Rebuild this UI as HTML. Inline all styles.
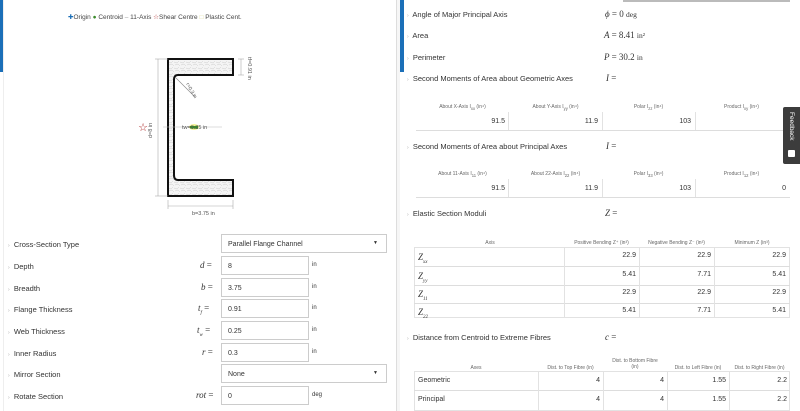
<!DOCTYPE html><html><head><style>
*{margin:0;padding:0;box-sizing:border-box}
body{width:800px;height:411px;overflow:hidden;background:#fff;font-family:"Liberation Sans",sans-serif;font-size:7px;color:#333;position:relative}
.a{position:absolute;white-space:nowrap}
.lbl{font-size:7.5px;color:#333}
.m{font-family:"Liberation Serif",serif;font-style:italic;font-size:9px}
.inp{position:absolute;border:1px solid #ccc;height:19px;font-size:7px;padding:6px 0 0 6px;background:#fff}
.th{font-size:5px;color:#666;text-align:center;line-height:6px}
.v{font-size:7px;text-align:right}
.hl{position:absolute;height:1px;background:#ddd}
.vl{position:absolute;width:1px;background:#e2e2e2}
.ar{color:#aaa;font-size:5px}
</style></head><body>
<div class="a" style="left:0;top:0;width:3px;height:72px;background:#1b6fb8"></div>
<div class="a" style="left:3px;top:0;width:394px;height:411px;border-left:1px solid #eee;border-right:1px solid #ddd"></div>
<div class="a" style="left:400px;top:0;width:4px;height:72px;background:#1b6fb8"></div>
<div class="a" style="left:397px;top:0;width:3px;height:411px;background:#f6f6f6"></div>
<div class="a" style="left:623px;top:0;width:167px;height:2px;background:#bbb"></div>
<div class="a" style="left:68px;top:13px;font-size:6.5px;color:#444"><span style="color:#1b6fb8">✚</span>Origin <span style="color:#3a8a2a">●</span> Centroid <span style="color:#999">–</span> 11-Axis <span style="color:#a22">☆</span>Shear Centre <span style="color:#dd9">□</span> Plastic Cent.</div>
<svg class="a" style="left:0;top:0" width="400" height="230">
<defs><pattern id="p" width="6" height="6" patternUnits="userSpaceOnUse"><rect width="6" height="6" fill="#f4f4f4"/><path d="M0 2l3 1 2-2M1 5l3-1 2 2" stroke="#ccc" stroke-width=".5" fill="none"/></pattern></defs>
<path d="M168 59H233V75H178Q174 75 174 80V175Q174 180 178 180H233V196H168Z" fill="url(#p)" stroke="#111" stroke-width="2"/>
<line x1="158" y1="59" x2="158" y2="196" stroke="#aaa" stroke-width=".6"/>
<line x1="155" y1="59" x2="168" y2="59" stroke="#aaa" stroke-width=".6"/>
<line x1="155" y1="196" x2="168" y2="196" stroke="#aaa" stroke-width=".6"/>
<line x1="168" y1="206" x2="233" y2="206" stroke="#aaa" stroke-width=".6"/>
<line x1="168" y1="200" x2="168" y2="209" stroke="#aaa" stroke-width=".6"/>
<line x1="233" y1="200" x2="233" y2="209" stroke="#aaa" stroke-width=".6"/>
<line x1="241" y1="59" x2="241" y2="75" stroke="#aaa" stroke-width=".6"/>
<line x1="238" y1="59" x2="244" y2="59" stroke="#aaa" stroke-width=".6"/>
<line x1="238" y1="75" x2="244" y2="75" stroke="#aaa" stroke-width=".6"/>
<line x1="176" y1="78" x2="195" y2="97" stroke="#888" stroke-width=".6"/>
<line x1="163" y1="127" x2="222" y2="127" stroke="#bbb" stroke-width=".6"/>
<ellipse cx="194" cy="127" rx="5" ry="3" fill="#ee6" opacity=".7"/>
<rect x="190" y="126" width="8" height="2.5" fill="#3a8a2a"/>
<text x="143" y="131" font-size="11" fill="#a22" text-anchor="middle">☆</text>
<text x="182" y="129" font-size="5.5" fill="#555">tw=0.25 in</text>
<text x="192" y="215" font-size="5.5" fill="#555">b=3.75 in</text>
<text transform="translate(152,138) rotate(-90)" font-size="5.5" fill="#555">d=8 in</text>
<text transform="translate(248,57) rotate(90)" font-size="5.5" fill="#555">tf=0.91 in</text>
<text transform="translate(186,84) rotate(60)" font-size="5" fill="#555">r=0.3 in</text>
</svg>
<div class="a lbl" style="left:8px;top:240px"><span class="ar">›</span>&nbsp; Cross-Section Type</div>
<div class="inp" style="left:221px;top:234px;width:166px">Parallel Flange Channel<span style="position:absolute;right:8px;top:5px;font-size:5px">▼</span></div>
<div class="a lbl" style="left:8px;top:262px"><span class="ar">›</span>&nbsp; Depth</div><div class="a m" style="left:200px;top:260px">d <span style="font-style:normal">=</span></div><div class="inp" style="left:221px;top:256px;width:88px">8</div><div class="a" style="left:312px;top:262px;font-size:6px">in</div>
<div class="a lbl" style="left:8px;top:284px"><span class="ar">›</span>&nbsp; Breadth</div><div class="a m" style="left:201px;top:282px">b <span style="font-style:normal">=</span></div><div class="inp" style="left:221px;top:278px;width:88px">3.75</div><div class="a" style="left:312px;top:284px;font-size:6px">in</div>
<div class="a lbl" style="left:8px;top:305px"><span class="ar">›</span>&nbsp; Flange Thickness</div><div class="a m" style="left:198px;top:303px">t<sub style="font-size:5px">f</sub> <span style="font-style:normal">=</span></div><div class="inp" style="left:221px;top:299px;width:88px">0.91</div><div class="a" style="left:312px;top:305px;font-size:6px">in</div>
<div class="a lbl" style="left:8px;top:327px"><span class="ar">›</span>&nbsp; Web Thickness</div><div class="a m" style="left:197px;top:325px">t<sub style="font-size:5px">w</sub> <span style="font-style:normal">=</span></div><div class="inp" style="left:221px;top:321px;width:88px">0.25</div><div class="a" style="left:312px;top:327px;font-size:6px">in</div>
<div class="a lbl" style="left:8px;top:349px"><span class="ar">›</span>&nbsp; Inner Radius</div><div class="a m" style="left:202px;top:347px">r <span style="font-style:normal">=</span></div><div class="inp" style="left:221px;top:343px;width:88px">0.3</div><div class="a" style="left:312px;top:349px;font-size:6px">in</div>
<div class="a lbl" style="left:8px;top:370px"><span class="ar">›</span>&nbsp; Mirror Section</div>
<div class="inp" style="left:221px;top:364px;width:166px">None<span style="position:absolute;right:8px;top:5px;font-size:5px">▼</span></div>
<div class="a lbl" style="left:8px;top:392px"><span class="ar">›</span>&nbsp; Rotate Section</div><div class="a m" style="left:196px;top:390px">rot <span style="font-style:normal">=</span></div><div class="inp" style="left:221px;top:386px;width:88px">0</div><div class="a" style="left:312px;top:392px;font-size:6px">deg</div>
<div class="a lbl" style="left:407px;top:10px"><span class="ar">›</span>&nbsp; Angle of Major Principal Axis</div><div class="a m" style="left:605px;top:9px">ϕ <span style="font-style:normal">= 0 <small>deg</small></span></div>
<div class="a lbl" style="left:407px;top:31px"><span class="ar">›</span>&nbsp; Area</div><div class="a m" style="left:604px;top:30px">A <span style="font-style:normal">= 8.41 <small>in²</small></span></div>
<div class="a lbl" style="left:407px;top:53px"><span class="ar">›</span>&nbsp; Perimeter</div><div class="a m" style="left:604px;top:52px">P <span style="font-style:normal">= 30.2 <small>in</small></span></div>
<div class="a lbl" style="left:407px;top:74px"><span class="ar">›</span>&nbsp; Second Moments of Area about Geometric Axes</div><div class="a m" style="left:606px;top:73px">I <span style="font-style:normal">=</span></div>
<div class="a th" style="left:416px;top:104px;width:93px">About X-Axis I<sub>xx</sub> (in⁴)</div>
<div class="a th" style="left:509px;top:104px;width:93px">About Y-Axis I<sub>yy</sub> (in⁴)</div>
<div class="a th" style="left:602px;top:104px;width:93px">Polar I<sub>zz</sub> (in⁴)</div>
<div class="a th" style="left:695px;top:104px;width:93px">Product I<sub>xy</sub> (in⁴)</div>
<div class="a v" style="left:416px;top:118px;width:89px">91.5</div><div class="a v" style="left:509px;top:118px;width:89px">11.9</div><div class="a v" style="left:602px;top:118px;width:89px">103</div>
<div class="vl" style="left:508px;top:112px;height:18px"></div><div class="vl" style="left:602px;top:112px;height:18px"></div><div class="vl" style="left:695px;top:112px;height:18px"></div>
<div class="hl" style="left:416px;top:130px;width:374px"></div>
<div class="a lbl" style="left:407px;top:142px"><span class="ar">›</span>&nbsp; Second Moments of Area about Principal Axes</div><div class="a m" style="left:606px;top:141px">I <span style="font-style:normal">=</span></div>
<div class="a th" style="left:416px;top:171px;width:93px">About 11-Axis I<sub>11</sub> (in⁴)</div>
<div class="a th" style="left:509px;top:171px;width:93px">About 22-Axis I<sub>22</sub> (in⁴)</div>
<div class="a th" style="left:602px;top:171px;width:93px">Polar I<sub>33</sub> (in⁴)</div>
<div class="a th" style="left:695px;top:171px;width:93px">Product I<sub>12</sub> (in⁴)</div>
<div class="a v" style="left:416px;top:185px;width:89px">91.5</div><div class="a v" style="left:509px;top:185px;width:89px">11.9</div><div class="a v" style="left:602px;top:185px;width:89px">103</div><div class="a v" style="left:695px;top:185px;width:91px">0</div>
<div class="vl" style="left:508px;top:179px;height:18px"></div><div class="vl" style="left:602px;top:179px;height:18px"></div><div class="vl" style="left:695px;top:179px;height:18px"></div>
<div class="hl" style="left:416px;top:197px;width:374px"></div>
<div class="a lbl" style="left:407px;top:209px"><span class="ar">›</span>&nbsp; Elastic Section Moduli</div><div class="a m" style="left:605px;top:208px">Z <span style="font-style:normal">=</span></div>
<div class="a th" style="left:416px;top:240px;width:148px">Axis</div>
<div class="a th" style="left:564px;top:240px;width:75px">Positive Bending Z⁺ (in³)</div>
<div class="a th" style="left:639px;top:240px;width:75px">Negative Bending Z⁻ (in³)</div>
<div class="a th" style="left:714px;top:240px;width:76px">Minimum Z (in³)</div>
<div class="a" style="left:414px;top:247px;width:376px;height:71px;border:1px solid #e2e2e2"></div>
<div class="hl" style="left:414px;top:266px;width:376px"></div><div class="hl" style="left:414px;top:285px;width:376px"></div><div class="hl" style="left:414px;top:303px;width:376px"></div>
<div class="vl" style="left:564px;top:247px;height:71px"></div><div class="vl" style="left:639px;top:247px;height:71px"></div><div class="vl" style="left:714px;top:247px;height:71px"></div>
<div class="a m" style="left:418px;top:252px">Z<sub style="font-size:5px">xx</sub></div><div class="a v" style="left:564px;top:252px;width:72px">22.9</div><div class="a v" style="left:639px;top:252px;width:72px">22.9</div><div class="a v" style="left:714px;top:252px;width:72px">22.9</div>
<div class="a m" style="left:418px;top:271px">Z<sub style="font-size:5px">yy</sub></div><div class="a v" style="left:564px;top:271px;width:72px">5.41</div><div class="a v" style="left:639px;top:271px;width:72px">7.71</div><div class="a v" style="left:714px;top:271px;width:72px">5.41</div>
<div class="a m" style="left:418px;top:289px">Z<sub style="font-size:5px">11</sub></div><div class="a v" style="left:564px;top:289px;width:72px">22.9</div><div class="a v" style="left:639px;top:289px;width:72px">22.9</div><div class="a v" style="left:714px;top:289px;width:72px">22.9</div>
<div class="a m" style="left:418px;top:307px">Z<sub style="font-size:5px">22</sub></div><div class="a v" style="left:564px;top:307px;width:72px">5.41</div><div class="a v" style="left:639px;top:307px;width:72px">7.71</div><div class="a v" style="left:714px;top:307px;width:72px">5.41</div>
<div class="a lbl" style="left:407px;top:333px"><span class="ar">›</span>&nbsp; Distance from Centroid to Extreme Fibres</div><div class="a m" style="left:605px;top:332px">c <span style="font-style:normal">=</span></div>
<div class="a th" style="left:414px;top:365px;width:124px">Axes</div>
<div class="a th" style="left:538px;top:365px;width:65px">Dist. to Top Fibre (in)</div>
<div class="a th" style="left:603px;top:358px;width:64px;white-space:normal">Dist. to Bottom Fibre<br>(in)</div>
<div class="a th" style="left:667px;top:365px;width:62px">Dist. to Left Fibre (in)</div>
<div class="a th" style="left:729px;top:365px;width:61px">Dist. to Right Fibre (in)</div>
<div class="a" style="left:414px;top:371px;width:376px;height:40px;border:1px solid #e2e2e2"></div>
<div class="hl" style="left:414px;top:390px;width:376px"></div>
<div class="vl" style="left:538px;top:371px;height:40px"></div><div class="vl" style="left:603px;top:371px;height:40px"></div><div class="vl" style="left:667px;top:371px;height:40px"></div><div class="vl" style="left:729px;top:371px;height:40px"></div>
<div class="a" style="left:418px;top:377px;font-size:7px">Geometric</div><div class="a v" style="left:538px;top:377px;width:62px">4</div><div class="a v" style="left:603px;top:377px;width:61px">4</div><div class="a v" style="left:667px;top:377px;width:59px">1.55</div><div class="a v" style="left:729px;top:377px;width:58px">2.2</div>
<div class="a" style="left:418px;top:396px;font-size:7px">Principal</div><div class="a v" style="left:538px;top:396px;width:62px">4</div><div class="a v" style="left:603px;top:396px;width:61px">4</div><div class="a v" style="left:667px;top:396px;width:59px">1.55</div><div class="a v" style="left:729px;top:396px;width:58px">2.2</div>
<div class="a" style="left:783px;top:107px;width:17px;height:57px;background:#3c3c3c;border-radius:2px 0 0 2px"></div>
<div class="a" style="left:795px;top:112px;transform-origin:0 0;transform:rotate(90deg);color:#fff;font-size:6.5px">Feedback</div>
<div class="a" style="left:788px;top:150px;width:7px;height:7px;background:#fff;border-radius:1px"></div>
</body></html>
